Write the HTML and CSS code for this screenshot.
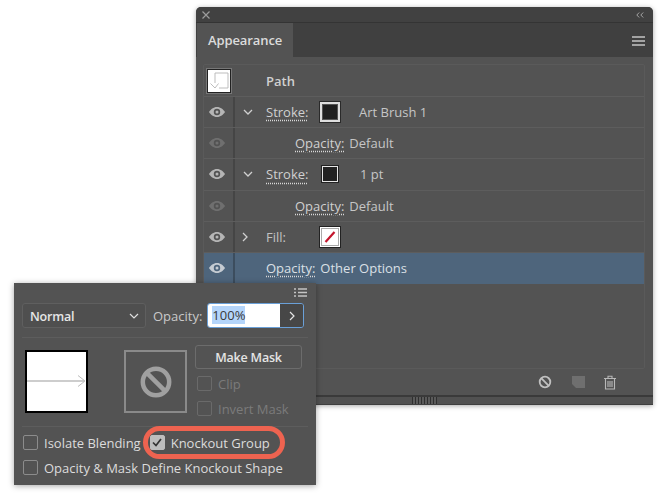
FILE: index.html
```html
<!DOCTYPE html>
<html lang="en">
<head>
<meta charset="utf-8">
<title>Appearance</title>
<link rel="stylesheet" href="styles.css">
</head>
<body>
<section class="panel appearance">
  <header class="titlebar">
    <svg class="ic-close" width="8" height="8" viewBox="0 0 8 8"><path d="M.5.500l7 7M7.500.500l-7 7"/></svg>
    <svg class="ic-collapse" width="8" height="6" viewBox="0 0 8 6"><path d="M3.2.5L.8 3l2.400 2.500M7.200.500L4.800 3l2.400 2.500"/></svg>
  </header>
  <div class="tabbar">
    <div class="tab">Appearance</div>
    <div class="menu-lines"><i></i><i></i><i></i></div>
  </div>
  <div class="body">
    <div class="list">
      <div class="row row-path">
        <div class="thumb"><svg width="22" height="22" viewBox="0 0 22 22"><path d="M7 13V3h13v15h-9M2.500 13.500L7 18l3.500-4.500"/></svg></div>
        <span class="lbl lbl-path">Path</span>
      </div>
      <div class="row">
        <div class="eye-cell"><svg class="eye" viewBox="0 0 16 10"><use href="#eye"/></svg></div>
        <div class="twist"><svg width="10" height="6" viewBox="0 0 10 6"><path d="M1 1l4 4 4-4"/></svg></div>
        <span class="lbl link w-stroke">Stroke:</span>
        <span class="swatch big"><b></b></span>
        <span class="val">Art Brush 1</span>
      </div>
      <div class="row">
        <div class="eye-cell dim"><svg class="eye" viewBox="0 0 16 10"><use href="#eye"/></svg></div>
        <div class="twist"></div>
        <span class="lbl link indent">Opacity:</span>
        <span class="val tight">Default</span>
      </div>
      <div class="row">
        <div class="eye-cell"><svg class="eye" viewBox="0 0 16 10"><use href="#eye"/></svg></div>
        <div class="twist"><svg width="10" height="6" viewBox="0 0 10 6"><path d="M1 1l4 4 4-4"/></svg></div>
        <span class="lbl link w-stroke">Stroke:</span>
        <span class="swatch small"><b></b></span>
        <span class="val">1 pt</span>
      </div>
      <div class="row">
        <div class="eye-cell dim"><svg class="eye" viewBox="0 0 16 10"><use href="#eye"/></svg></div>
        <div class="twist"></div>
        <span class="lbl link indent">Opacity:</span>
        <span class="val tight">Default</span>
      </div>
      <div class="row">
        <div class="eye-cell"><svg class="eye" viewBox="0 0 16 10"><use href="#eye"/></svg></div>
        <div class="twist"><svg class="right" width="6" height="10" viewBox="0 0 6 10"><path d="M1 1l4 4-4 4"/></svg></div>
        <span class="lbl w-stroke dimtext">Fill:</span>
        <span class="swatch none"><svg width="14" height="14" viewBox="0 0 14 14"><path d="M2.500 12L11.500 2"/></svg></span>
      </div>
      <div class="row selected">
        <div class="eye-cell"><svg class="eye" viewBox="0 0 16 10"><use href="#eye"/></svg></div>
        <div class="twist"></div>
        <span class="lbl link">Opacity:</span>
        <span class="val tight">Other Options</span>
      </div>
    </div>
    <div class="footer">
      <svg class="f-none" width="14" height="14" viewBox="0 0 14 14"><circle cx="7" cy="7" r="5.300"/><path d="M3.200 3.200l7.600 7.600"/></svg>
      <svg class="f-new" width="13" height="12" viewBox="0 0 13 12"><path d="M0 0h13v12H4L0 8z"/></svg>
      <svg class="f-trash" width="14" height="15" viewBox="0 0 14 15"><path d="M1 3.500h12M5 3V1.200h4V3M2.500 3.500V14h9V3.500M5 6v6M7 6v6M9 6v6"/></svg>
    </div>
  </div>
  <div class="grip"><div class="grip-marks"></div></div>
</section>

<section class="panel transparency">
  <div class="opt-menu">
    <svg width="13" height="9" viewBox="0 0 13 9"><path d="M0 1h2M4 1h9M0 4.500h2M4 4.500h9M0 8h2M4 8h9"/></svg>
  </div>
  <div class="top-row">
    <div class="select"><span>Normal</span><svg width="10" height="6" viewBox="0 0 10 6"><path d="M1 1l4 4 4-4"/></svg></div>
    <span class="op-label">Opacity:</span>
    <div class="op-field">
      <div class="op-input"><span class="sel-text">100%</span></div>
      <div class="op-btn"><svg width="6" height="10" viewBox="0 0 6 10"><path d="M1 1l4 4-4 4"/></svg></div>
    </div>
  </div>
  <div class="mask-row">
    <div class="preview"><svg width="59" height="12" viewBox="0 0 59 12"><path class="arrow-line" d="M0 6h57"/><path d="M51 .5L58 6l-7 5.500"/></svg></div>
    <div class="mask-box"><svg width="32" height="32" viewBox="0 0 32 32"><circle cx="16" cy="16" r="13.200"/><path d="M6.800 6.800l18.400 18.400"/></svg></div>
    <div class="mask-controls">
      <button class="make-mask" type="button">Make Mask</button>
      <label class="check disabled"><span class="box"></span>Clip</label>
      <label class="check disabled"><span class="box"></span>Invert Mask</label>
    </div>
  </div>
  <div class="options">
    <div class="opt-line">
      <label class="check"><span class="box"></span>Isolate Blending</label>
      <label class="check knockout"><span class="box on"><svg width="10" height="9" viewBox="0 0 10 9"><path d="M1 4.500l3 3L9 1"/></svg></span>Knockout Group</label>
    </div>
    <label class="check"><span class="box"></span>Opacity &amp; Mask Define Knockout Shape</label>
  </div>
</section>

<svg class="defs" width="0" height="0" aria-hidden="true">
  <symbol id="eye" viewBox="0 0 16 10">
    <path fill-rule="evenodd" d="M8 0c3.600 0 6.400 2.600 8 5-1.600 2.400-4.400 5-8 5S1.600 7.400 0 5c1.600-2.400 4.400-5 8-5zm0 1.800a3.200 3.200 0 1 0 0 6.400 3.200 3.200 0 0 0 0-6.400zM8 3.500a1.500 1.500 0 1 1 0 3 1.500 1.500 0 0 1 0-3z"/>
  </symbol>
</svg>
</body>
</html>
```
FILE: styles.css
```css
*, *::after { box-sizing: border-box; }
html, body { margin: 0; padding: 0; }
body {
  width: 659px;
  height: 494px;
  overflow: hidden;
  position: relative;
  background: #fff;
  font-family: "Open Sans", "Noto Sans", sans-serif;
  font-size: 13px;
  color: #d2d2d2;
}
.defs { position: absolute; }
svg { display: block; fill: none; }

.panel { position: absolute; background: #535353; }

/* Appearance panel */
.appearance {
  left: 196px;
  top: 7px;
  width: 457px;
  height: 398px;
  border-radius: 5px 5px 0 0;
  box-shadow: 0 1px 5px rgba(0,0,0,.35);
  display: flex;
  flex-direction: column;
}
.titlebar {
  height: 16px;
  flex: none;
  background: #414141;
  border-bottom: 1px solid #343434;
  border-radius: 5px 5px 0 0;
  display: flex;
  align-items: center;
  justify-content: space-between;
  padding: 0 9px 0 6px;
}
.ic-close path { stroke: #9c9c9c; stroke-width: 1.2; }
.ic-collapse path { stroke: #a5a5a5; stroke-width: 1; }
.tabbar {
  height: 34px;
  flex: none;
  background: #404040;
  display: flex;
  align-items: stretch;
  justify-content: space-between;
  padding-left: 1px;
  padding-right: 8px;
}
.tab {
  width: 96px;
  background: #535353;
  color: #dcdcdc;
  font-weight: 600;
  font-size: 13px;
  letter-spacing: -.1px;
  padding: 8px 0 0 11px;
}
.menu-lines {
  width: 13px;
  display: flex;
  flex-direction: column;
  gap: 2px;
  padding-top: 13px;
}
.menu-lines i { display: block; height: 2px; background: #a3a3a3; }
.body { flex: 1; padding: 7px 8px 0 7px; display: flex; flex-direction: column; }
.list {
  height: 305px;
  flex: none;
  border: 1px solid #5a5a5a;
  border-radius: 2px;
}
.row {
  height: 31.2px;
  border-bottom: 1px solid #5d5d5d;
  display: flex;
  align-items: center;
  font-size: 13px;
}
.row:last-child { border-bottom: 0; }
.row-path { height: 32px; padding-left: 3px; }
.thumb {
  width: 24px;
  height: 24px;
  background: #fff;
  border: 1px solid #222;
  outline: 1px solid #777;
}
.thumb svg path { stroke: #b5b5b5; stroke-width: .9; }
.lbl-path { margin-left: 35px; font-weight: 600; color: #cfcfcf; }
.eye-cell {
  width: 31px;
  height: 100%;
  flex: none;
  display: flex;
  align-items: center;
  justify-content: center;
  border-right: 2px solid #454545;
  padding-right: 3px;
}
.eye { width: 16px; height: 10px; fill: #b5b5b5; }
.eye-cell.dim .eye { fill: #6f6f6f; }
.twist {
  width: 31px;
  flex: none;
  display: flex;
  justify-content: center;
  padding-right: 5px;
}
.twist path { stroke: #d0d0d0; stroke-width: 1.3; }
.twist .right { margin-right: 6px; }
.lbl { color: #d0d0d0; }
.link {
  text-decoration: underline dotted #d8d8d8;
  text-underline-offset: 3px;
}
.w-stroke { width: 53px; flex: none; }
.dimtext { color: #c2c2c2; }
.indent { margin-left: 29px; }
.val { color: #c6c6c6; margin-left: 18px; }
.val.tight { margin-left: 5px; }
.swatch { flex: none; display: block; }
.swatch.big {
  width: 22px;
  height: 22px;
  border: 1px solid #2a2a2a;
  background: #dedede;
  padding: 2px;
}
.swatch.big b {
  display: block;
  width: 100%;
  height: 100%;
  background: #1f1f1f;
  border: 1px solid #555;
}
.swatch.small {
  width: 16px;
  height: 16px;
  margin: 0 3px;
  border: 1px solid #e5e5e5;
  outline: 1px solid #222;
  background: #222;
}
.swatch.small + .val { margin-left: 19px; }
.swatch.none {
  width: 22px;
  height: 22px;
  background: #fff;
  border: 1px solid #222;
  outline: 1px solid #aaa;
  outline-offset: -3px;
  padding: 3px;
}
.swatch.none path { stroke: #c4172e; stroke-width: 2.2; }
.selected { background: #4e657c; padding-bottom: 1px; }
.selected .eye-cell { border-right-color: #3c4d5e; }
.selected .eye { fill: #c5cbd2; }
.selected .lbl, .selected .val { color: #dbe0e6; }
.footer {
  height: 26px;
  display: flex;
  align-items: center;
  padding-left: 335px;
}
.f-none circle, .f-none path { stroke: #c0c0c0; stroke-width: 1.8; }
.f-new { margin-left: 20px; }
.f-new path { fill: #6f6f6f; }
.f-trash { margin-left: 18px; }
.f-trash path { stroke: #b8b8b8; stroke-width: 1.1; }
.grip {
  height: 10px;
  flex: none;
  background: #515151;
  border-top: 2px solid #3a3a3a;
  border-bottom: 1px solid #3f3f3f;
  padding-left: 216px;
}
.grip-marks {
  width: 25px;
  height: 7px;
  background: repeating-linear-gradient(90deg, #2f2f2f 0 1px, #5a5a5a 1px 3px);
}

/* Transparency panel */
.transparency {
  left: 14px;
  top: 283px;
  width: 302px;
  height: 202px;
  box-shadow: 0 1px 6px rgba(0,0,0,.35);
  padding: 0 8px;
  display: flex;
  flex-direction: column;
}
.opt-menu {
  height: 14px;
  display: flex;
  justify-content: flex-end;
  align-items: flex-end;
  padding-right: 1px;
  flex: none;
}
.opt-menu path { stroke: #c4c4c4; stroke-width: 1.4; }
.top-row {
  margin-top: 6px;
  height: 25px;
  flex: none;
  display: flex;
  align-items: center;
}
.select {
  width: 124px;
  height: 25px;
  border: 1px solid #5f5f5f;
  border-radius: 3px;
  background: #4f4f4f;
  display: flex;
  align-items: center;
  justify-content: space-between;
  padding: 1px 6px 0 7px;
  color: #e6e6e6;
  font-weight: 600;
  font-size: 12.5px;
  letter-spacing: -.2px;
}
.select path { stroke: #e0e0e0; stroke-width: 1.2; }
.op-label { margin-left: 7px; color: #c9c9c9; }
.op-field {
  margin-left: 5px;
  width: 97px;
  height: 25px;
  border: 1px solid #6aa0d8;
  border-radius: 3px;
  display: flex;
  overflow: hidden;
  flex: none;
}
.op-input {
  width: 72px;
  background: #fff;
  padding: 2px 0 0 4px;
  color: #3a3a3a;
  font-size: 13px;
}
.sel-text { background: #b4d5fb; }
.op-btn {
  flex: 1;
  background: #474747;
  display: flex;
  align-items: center;
  justify-content: center;
}
.op-btn path { stroke: #e6e6e6; stroke-width: 1.2; }
.mask-row {
  margin-top: 9px;
  padding-top: 12px;
  height: 89px;
  flex: none;
  display: flex;
  border-top: 1px solid #5d5d5d;
}
.preview {
  margin-left: 3px;
  width: 63px;
  height: 63px;
  background: #fff;
  border: 2px solid #000;
  flex: none;
  padding: 23px 0 0 0;
}
.preview path { stroke: #bcbcbc; stroke-width: 1; }
.preview .arrow-line { stroke-width: 1.5; }
.mask-box {
  margin-left: 36px;
  width: 63px;
  height: 63px;
  border: 2px solid #8a8a8a;
  flex: none;
  display: flex;
  align-items: center;
  justify-content: center;
}
.mask-box circle, .mask-box path { stroke: #a0a0a0; stroke-width: 4.5; }
.mask-controls { margin: -5px 0 0 8px; display: flex; flex-direction: column; width: 107px; }
.make-mask {
  height: 24px;
  width: 107px;
  flex: none;
  background: #535353;
  border: 1px solid #6c6c6c;
  border-radius: 3px;
  color: #e4e4e4;
  font: 600 12.5px "Open Sans", sans-serif;
  letter-spacing: -.2px;
  margin-bottom: 7px;
  padding: 0;
}
.mask-controls .check { margin-bottom: 10px; margin-left: 2px; }
.check { display: flex; align-items: center; gap: 6px; color: #dcdcdc; height: 15px; }
.check.disabled { color: #7b7b7b; }
.box {
  width: 15px;
  height: 15px;
  flex: none;
  border: 1px solid #8c8c8c;
  border-radius: 2px;
}
.check.disabled .box { border-color: #6a6a6a; }
.box.on {
  background: #bdbdbd;
  border-color: #bdbdbd;
  display: flex;
  align-items: center;
  justify-content: center;
}
.box.on path { stroke: #333; stroke-width: 1.7; }
.options {
  border-top: 1px solid #5d5d5d;
  padding: 8px 0 0 1px;
  display: flex;
  flex-direction: column;
  gap: 10px;
  flex: none;
}
.opt-line { display: flex; align-items: center; }
.knockout { position: relative; margin-left: 9px; }
.knockout::after {
  content: "";
  position: absolute;
  left: -7px;
  top: -9px;
  width: 142px;
  height: 33px;
  border: 5px solid #ee6350;
  border-radius: 17px;
}
```
